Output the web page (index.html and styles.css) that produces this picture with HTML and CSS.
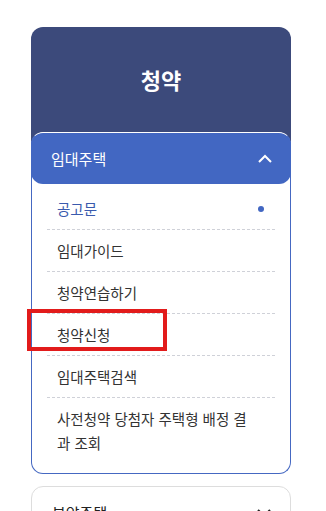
FILE: index.html
```html
<!DOCTYPE html>
<html lang="ko">
<head>
    <meta charset="UTF-8">
    <meta name="viewport" content="width=device-width, initial-scale=1.0">
    <title>청약</title>
    <link rel="stylesheet" href="styles.css">
</head>
<body>
    <!-- 왼쪽 메뉴 -->
    <div class="lnb">
        <h2 class="lnbTitle">청약</h2>

        <div class="menuGroup open">
            <div class="menuHead">
                <span>임대주택</span>
                <svg class="chevron" width="16" height="10" viewBox="0 0 16 10">
                    <path d="M2 8 L8 2 L14 8" fill="none" stroke="#ffffff" stroke-width="2"/>
                </svg>
            </div>
            <ul class="subMenu">
                <li class="on">공고문</li>
                <li>임대가이드</li>
                <li>청약연습하기</li>
                <li class="marked">청약신청</li>
                <li>임대주택검색</li>
                <li class="last">사전청약 당첨자 주택형 배정 결과 조회</li>
            </ul>
        </div>

        <div class="menuGroup">
            <div class="menuHead">
                <span>분양주택</span>
                <svg class="chevron" width="16" height="10" viewBox="0 0 16 10">
                    <path d="M2 2 L8 8 L14 2" fill="none" stroke="#222222" stroke-width="2"/>
                </svg>
            </div>
        </div>
    </div>
</body>
</html>
```

FILE: styles.css
```css
/* 기본 */
body {
    margin: 0;
    padding: 27px 0 0 31px;
    background-color: #ffffff;
    font-family: 'Noto Sans CJK KR', 'Noto Sans', sans-serif;
    color: #333333;
}

.lnb {
    width: 260px;
}

.lnbTitle {
    margin: 0;
    padding-bottom: 12px;
    height: 105px;
    line-height: 105px;
    text-align: center;
    font-size: 22px;
    font-weight: 700;
    color: #ffffff;
    background-color: #3c4a7b;
    border-radius: 12px 12px 0 0;
}

.menuGroup {
    position: relative;
    margin-top: 12px;
    background-color: #ffffff;
    border: 1px solid #dddddd;
    border-radius: 12px;
}

.menuGroup.open {
    margin-top: -12px;
    border-color: #4568c2;
    border-top-color: #ffffff;
}

.menuHead {
    display: flex;
    justify-content: space-between;
    align-items: center;
    height: 51px;
    padding: 0 18px 0 20px;
    font-size: 15px;
    color: #222222;
    border-radius: 12px;
}

.open .menuHead {
    margin: 0 -1px;
    background-color: #4267c2;
    color: #ffffff;
}

.subMenu {
    list-style: none;
    margin: 0;
    padding: 4px 15px 10px;
}

.subMenu li {
    position: relative;
    padding: 9px 10px 8px;
    line-height: 24px;
    font-size: 14.5px;
    border-bottom: 1px dashed #cfd1d8;
}

.subMenu li.last {
    border-bottom: none;
    padding-right: 20px;
}

.subMenu li.on {
    color: #3a5aad;
}

/* 선택 점 */
.subMenu li.on::after {
    content: '';
    position: absolute;
    right: 11px;
    top: 18px;
    width: 6px;
    height: 6px;
    border-radius: 50%;
    background-color: #4267c2;
}

/* 표시 상자 */
.subMenu li.marked::before {
    content: '';
    position: absolute;
    left: -20px;
    top: -5px;
    width: 140px;
    height: 42px;
    box-sizing: border-box;
    border: 4px solid #e21b1b;
}
```
